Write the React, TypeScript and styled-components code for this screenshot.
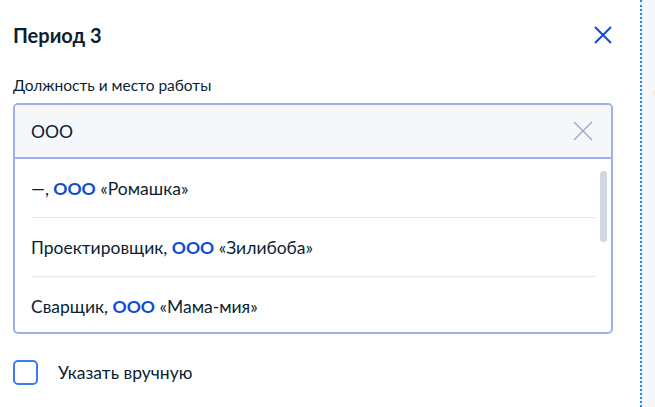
import styled, { createGlobalStyle } from 'styled-components';

const Global = createGlobalStyle`
  html, body {
    margin: 0;
    padding: 0;
    background: #fff;
  }
  body {
    font-family: Lato, "Noto Sans", sans-serif;
    color: #0b1f33;
  }
`;

const Page = styled.div`
  display: flex;
  height: 407px;
  overflow: hidden;
`;

const Panel = styled.div`
  width: 640px;
  box-sizing: border-box;
  padding: 22px 27px 0 13px;
  background: #fff;
`;

const Aside = styled.div`
  flex: 1;
  position: relative;
  background: #f5f7fc;
  border-left: 2px dotted #1a8cff;
`;

const Hint = styled.div`
  position: absolute;
  left: 10px;
  top: 87px;
  width: 0;
  height: 0;
  border-top: 6px solid transparent;
  border-bottom: 6px solid transparent;
  border-right: 6px solid #fbe9c4;
`;

const Header = styled.div`
  display: flex;
  align-items: center;
  justify-content: space-between;
  height: 26px;
`;

const Title = styled.h2`
  margin: 0;
  font-size: 20px;
  font-weight: 700;
  line-height: 26px;
`;

const IconButton = styled.button`
  display: flex;
  padding: 0;
  border: 0;
  background: none;
  cursor: pointer;
`;

const Label = styled.div`
  margin-top: 27px;
  font-size: 15.5px;
  line-height: 20px;
`;

const Combo = styled.div`
  margin-top: 8px;
  border: 2px solid #9db2ec;
  border-radius: 5px;
  overflow: hidden;
`;

const InputRow = styled.div`
  display: flex;
  align-items: center;
  height: 52px;
  padding: 0 18px 0 16px;
  background: #f5f7fa;
  border-bottom: 2px solid #9db2ec;
`;

const Input = styled.input`
  flex: 1;
  padding: 0;
  border: 0;
  outline: none;
  background: transparent;
  font-family: inherit;
  font-size: 17.5px;
  color: #0b1f33;
`;

const List = styled.div`
  position: relative;
  height: 173px;
  overflow: hidden;
  padding-right: 16px;
`;

const Item = styled.div`
  margin-left: 16px;
  height: 58px;
  display: flex;
  align-items: center;
  font-size: 17.5px;
  border-bottom: 1px solid #e4e6ea;
  &:last-child {
    border-bottom: 0;
  }
`;

const Mark = styled.b`
  color: #0d4cd3;
  font-weight: 700;
`;

const Scrollbar = styled.div`
  position: absolute;
  right: 4px;
  top: 12px;
  width: 7px;
  height: 71px;
  border-radius: 4px;
  background: #d1d6e0;
`;

const CheckRow = styled.label`
  display: flex;
  align-items: center;
  gap: 20px;
  margin-top: 26px;
  font-size: 17.5px;
`;

const Box = styled.span`
  width: 21px;
  height: 21px;
  border: 2px solid #3b7cf0;
  border-radius: 5px;
`;

const items = [
  { before: '—, ', after: ' «Ромашка»' },
  { before: 'Проектировщик, ', after: ' «Зилибоба»' },
  { before: 'Сварщик, ', after: ' «Мама-мия»' },
];

export default function App() {
  return (
    <Page>
      <Global />
      <Panel>
        <Header>
          <Title>Период 3</Title>
          <IconButton aria-label="Закрыть">
            <svg width="20" height="20" viewBox="0 0 20 20">
              <path d="M2 2 L18 18 M18 2 L2 18" stroke="#0d4cd3" strokeWidth="2" fill="none" />
            </svg>
          </IconButton>
        </Header>
        <Label>Должность и место работы</Label>
        <Combo>
          <InputRow>
            <Input defaultValue="ООО" />
            <svg width="20" height="20" viewBox="0 0 20 20">
              <path d="M1 1 L19 19 M19 1 L1 19" stroke="#9aa6c2" strokeWidth="1.3" fill="none" />
            </svg>
          </InputRow>
          <List>
            {items.map((it) => (
              <Item key={it.before}>
                <span>
                  {it.before}
                  <Mark>ООО</Mark>
                  {it.after}
                </span>
              </Item>
            ))}
            <Scrollbar />
          </List>
        </Combo>
        <CheckRow>
          <Box />
          Указать вручную
        </CheckRow>
      </Panel>
      <Aside>
        <Hint />
      </Aside>
    </Page>
  );
}
